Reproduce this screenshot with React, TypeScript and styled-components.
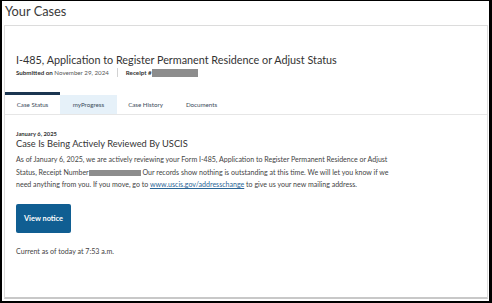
import styled, { createGlobalStyle } from 'styled-components';

const GlobalStyle = createGlobalStyle`
    html, body {
        margin: 0;
        padding: 0;
        background: #fff;
    }
    body {
        font-family: Lato, "Open Sans", sans-serif;
        color: #3d3d3d;
    }
`;

const Frame = styled.div`
    box-sizing: border-box;
    width: 492px;
    height: 303px;
    border-style: solid;
    border-color: #000;
    border-width: 1px 3px 2px 2px;
    padding: 0 1px 0 2px;
    display: flex;
    flex-direction: column;
    overflow: hidden;
`;

const PageTitle = styled.h1`
    margin: 0;
    height: 24px;
    font-size: 12.8px;
    font-weight: 400;
    line-height: 20px;
    color: #3a3a3a;
    padding-left: 1px;
`;

const Card = styled.section`
    box-sizing: border-box;
    flex: 1;
    margin-bottom: 2px;
    border: 1px solid #dcdcdc;
    border-bottom: 2px solid #c8c8c8;
    display: flex;
    flex-direction: column;
`;

const Header = styled.div`
    box-sizing: border-box;
    height: 66px;
    padding: 27px 11px 0;
`;

const CaseTitle = styled.h2`
    margin: 0;
    font-size: 10.8px;
    font-weight: 400;
    line-height: 14px;
    color: #333;
`;

const Meta = styled.div`
    display: flex;
    align-items: center;
    margin-top: 1px;
    font-size: 6.2px;
    line-height: 8px;
    color: #555;
`;

const Bold = styled.b`
    font-weight: 700;
    color: #333;
`;

const Divider = styled.span`
    width: 1px;
    height: 9px;
    background: #d2d2d2;
    margin: 0 8px;
`;

const Redacted = styled.span<{ w: number; h: number }>`
    display: inline-block;
    width: ${({ w }) => w}px;
    height: ${({ h }) => h}px;
    background: #8d8d8d;
    vertical-align: middle;
`;

const TabRow = styled.div`
    display: flex;
    height: 23px;
    box-sizing: border-box;
    border-bottom: 1px solid #e6e6e6;
`;

const Tab = styled.div<{ active?: boolean; tint?: boolean; w: number }>`
    width: ${({ w }) => w}px;
    box-sizing: border-box;
    display: flex;
    align-items: center;
    justify-content: center;
    font-size: 6.2px;
    color: #3b4b5a;
    border-top: 3px solid ${({ active }) => (active ? '#1b3550' : 'transparent')};
    background: ${({ tint }) => (tint ? '#e6f1f9' : 'transparent')};
    background-clip: padding-box;
`;

const Body = styled.div`
    padding: 15px 11px 0;
`;

const DateLine = styled.div`
    font-size: 5.8px;
    font-weight: 700;
    line-height: 8px;
    color: #333;
`;

const StatusTitle = styled.h3`
    margin: 0;
    font-size: 9.3px;
    font-weight: 400;
    line-height: 12px;
    color: #333;
`;

const Paragraph = styled.p`
    margin: 4px 0 0;
    width: 384px;
    font-size: 7.05px;
    line-height: 12.5px;
    color: #444;
`;

const Link = styled.a`
    color: #2a6596;
    text-decoration: underline;
`;

const NoticeButton = styled.button`
    display: block;
    margin-top: 12px;
    width: 55px;
    height: 29px;
    padding: 0;
    border: none;
    border-radius: 2px;
    background: #105e92;
    color: #fff;
    font-family: Lato, "Open Sans", sans-serif;
    font-size: 7.4px;
    font-weight: 700;
`;

const Updated = styled.div`
    margin-top: 14px;
    font-size: 7.1px;
    line-height: 10px;
    color: #444;
`;

const tabs = [
    { label: 'Case Status', w: 55, active: true },
    { label: 'myProgress', w: 57, tint: true },
    { label: 'Case History', w: 57 },
    { label: 'Documents', w: 55 },
];

export default function App() {
    return (
        <>
            <GlobalStyle />
            <Frame>
                <PageTitle>Your Cases</PageTitle>
                <Card>
                    <Header>
                        <CaseTitle>I-485, Application to Register Permanent Residence or Adjust Status</CaseTitle>
                        <Meta>
                            <Bold>Submitted on</Bold>&nbsp;November 29, 2024
                            <Divider />
                            <Bold>Receipt #</Bold>
                            <Redacted w={46} h={8} />
                        </Meta>
                    </Header>
                    <TabRow>
                        {tabs.map((t) => (
                            <Tab key={t.label} w={t.w} active={t.active} tint={t.tint}>
                                {t.label}
                            </Tab>
                        ))}
                    </TabRow>
                    <Body>
                        <DateLine>January 6, 2025</DateLine>
                        <StatusTitle>Case Is Being Actively Reviewed By USCIS</StatusTitle>
                        <Paragraph>
                            As of January 6, 2025, we are actively reviewing your Form I-485, Application to Register Permanent Residence or Adjust
                            Status, Receipt Number<Redacted w={52} h={6} /> Our records show nothing is outstanding at this time. We will let you know if we
                            need anything from you. If you move, go to <Link href="#">www.uscis.gov/addresschange</Link> to give us your new mailing address.
                        </Paragraph>
                        <NoticeButton>View notice</NoticeButton>
                        <Updated>Current as of today at 7:53 a.m.</Updated>
                    </Body>
                </Card>
            </Frame>
        </>
    );
}
